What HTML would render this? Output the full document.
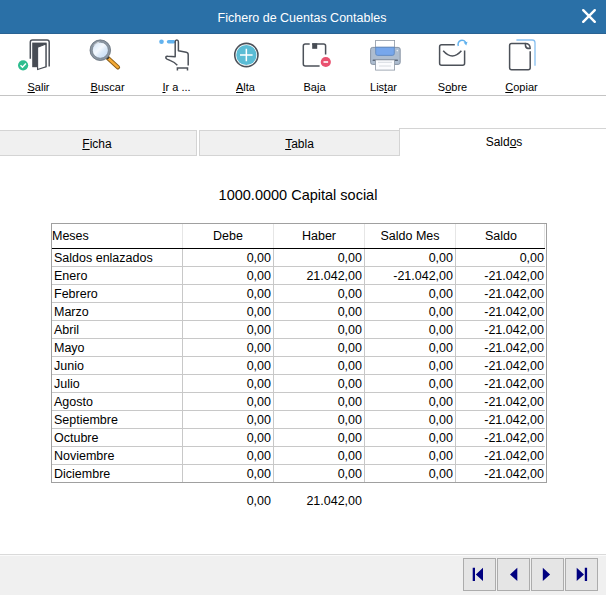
<!DOCTYPE html>
<html><head><meta charset="utf-8">
<style>
*{box-sizing:border-box;margin:0;padding:0}
html,body{width:606px;height:595px;overflow:hidden;background:#fff;font-family:"Liberation Sans",sans-serif;color:#000;position:relative}
.abs{position:absolute}
#title{left:0;top:0;width:606px;height:34px;background:#2a70a7;border-bottom:1px solid #2a6393}
#title .t{position:absolute;left:-1px;width:606px;top:11px;text-align:center;color:#fff;font-size:12.5px;line-height:14px}
#close{position:absolute;left:581px;top:8px;width:16px;height:16px}
#tbline{left:0;top:95px;width:606px;height:1px;background:#c4c4c4}
.lbl{position:absolute;top:81px;font-size:11px;line-height:13px;text-align:center;width:69px;white-space:nowrap}
.lbl u{text-decoration:underline}
.tab{position:absolute;top:130px;height:26px;background:#f0f0f0;border:1px solid #d4d4d4;font-size:12px;text-align:center;line-height:24px;padding-top:1px}
.tab.act{top:128px;height:28px;background:#fff;border-bottom:none;line-height:24px;padding-top:1px}
#heading{left:0;width:596px;top:186px;text-align:center;font-size:14.5px;line-height:18px}
#tbl{left:51px;top:223px;width:496px;height:260px;border:1px solid #a0a0a0}
.hl{position:absolute;background:#d4d4d4}
.c{position:absolute;font-size:12.5px;line-height:18px;white-space:nowrap}
.r{text-align:right}
#bottom{left:0;top:554px;width:606px;height:41px;background:#f0f0f0;border-top:1px solid #dadada;box-shadow:inset 0 1px #fafafa}
.nb{position:absolute;top:558px;width:33px;height:33px;background:#e5e5e5;border:1px solid #acacac}
</style></head><body>
<div id="title" class="abs"><div class="t">Fichero de Cuentas Contables</div>
<svg id="close" viewBox="0 0 16 16"><path d="M2.2 2.2L13.8 13.8M13.8 2.2L2.2 13.8" stroke="#fff" stroke-width="2.4" stroke-linecap="round"/></svg>
</div>

<svg class="abs" style="left:0;top:0" width="606" height="100" viewBox="0 0 606 100">
<defs>
<linearGradient id="lens" x1="0" y1="0" x2="1" y2="1"><stop offset="0" stop-color="#c9def6"/><stop offset="0.45" stop-color="#f4f9fe"/><stop offset="0.6" stop-color="#dbe9f8"/><stop offset="1" stop-color="#bcd5f1"/></linearGradient>
</defs>
<!-- Salir door -->
<path d="M30.3 58.7V42.2Q30.3 40 32.5 40H47Q49.2 40 49.2 42.2V66.5" fill="none" stroke="#4c5159" stroke-width="1.5"/>
<rect x="32.2" y="42.6" width="14.4" height="24.6" fill="#474c54"/>
<path d="M37.6 47.3L45.9 44.1V66.8L37.6 69.6Z" fill="#fff" stroke="#474c54" stroke-width="1.1"/>
<circle cx="23.1" cy="65.3" r="5.1" fill="#2ebd8f"/>
<path d="M20.5 65.2L22.5 67.2L25.9 63.6" fill="none" stroke="#fff" stroke-width="1.5"/>
<!-- Buscar magnifier -->
<path d="M107.4 57.6L118 67.4" stroke="#8a5d18" stroke-width="4.2" stroke-linecap="round"/>
<path d="M108.8 58.9L117.8 67.2" stroke="#f5aa35" stroke-width="2.5" stroke-linecap="round"/>
<path d="M106.6 56.8L108.6 58.6" stroke="#333" stroke-width="2.2"/>
<circle cx="100.3" cy="50.2" r="9.2" fill="url(#lens)" stroke="#8b96a2" stroke-width="2.5"/><circle cx="100.3" cy="50.2" r="10.3" fill="none" stroke="#5f6a76" stroke-width="0.7"/><circle cx="100.3" cy="50.2" r="8" fill="none" stroke="#6d7884" stroke-width="0.6"/>
<path d="M94 45.5Q96 42.5 99.5 42" fill="none" stroke="#fff" stroke-width="1" opacity="0.7"/>
<!-- Ir a hand -->
<circle cx="161.5" cy="41.8" r="2.3" fill="#62b2ee"/>
<path d="M168.6 41.8H173.6" stroke="#62b2ee" stroke-width="3.6" stroke-linecap="round"/>
<path d="M177.3 65.2Q174.5 62.2 170.5 60.6L167 59.1Q165.5 58.3 165.8 57.1Q166.3 56 167.8 56.2L175.2 56.8V41.7Q175.2 39.9 176.8 39.9Q178.4 39.9 178.4 41.7V50.8L186.2 52.2Q188.2 52.6 188.2 54.8V65.6" fill="none" stroke="#4c5159" stroke-width="1.5" stroke-linejoin="round"/>
<path d="M177.4 70.5V68H187.5V70.5" fill="none" stroke="#4c5159" stroke-width="1.5"/>
<!-- Alta -->
<circle cx="246.35" cy="55" r="11.6" fill="#fff" stroke="#4c5159" stroke-width="1.6"/>
<circle cx="246.35" cy="55" r="10.1" fill="#5bbcd5"/>
<path d="M240 55H252.6M246.35 48.7V61.3" stroke="#fff" stroke-width="1.5"/>
<!-- Baja -->
<path d="M309.7 44H305.3Q303.3 44 303.3 46V64Q303.3 66 305.3 66H319.6M312.2 44H323.6Q325.6 44 325.6 46V54.6" fill="none" stroke="#4c5159" stroke-width="1.5"/>
<rect x="312.2" y="43.3" width="5" height="5.5" fill="#474c54"/>
<circle cx="325.8" cy="62" r="5.1" fill="#e9516f"/>
<path d="M323.5 62H328.1" stroke="#fff" stroke-width="1.6"/>
<!-- Listar printer -->
<rect x="375.6" y="40.4" width="19" height="8" fill="#fff" stroke="#8c96a3" stroke-width="0.8"/>
<rect x="370.6" y="47.4" width="29.6" height="17" rx="2" fill="#adbdd0" stroke="#7e8b9c" stroke-width="0.9"/>
<path d="M375.7 47.2H394.3V53.6Q394.3 55.4 392.5 55.4H377.5Q375.7 55.4 375.7 53.6Z" fill="#77a7ec" stroke="#5b84bd" stroke-width="0.8"/>
<path d="M373.3 60.2H397.3" stroke="#5f6b7b" stroke-width="1.6" stroke-linecap="round"/>
<rect x="375.6" y="59.9" width="19" height="10.2" fill="#fbfcfe" stroke="#8c96a3" stroke-width="0.8"/>
<path d="M378 62.3H392M379 66H391" stroke="#d3d8de" stroke-width="0.9"/>
<circle cx="397.3" cy="50.6" r="0.8" fill="#e9eef4"/>
<!-- Sobre envelope -->
<path d="M454.8 44.8H441.6Q439.6 44.8 439.6 46.8V63.3Q439.6 65.3 441.6 65.3H462.6Q464.6 65.3 464.6 63.3V50.5M443.2 50.8Q452.3 61.2 461.4 50.8" fill="none" stroke="#4c5159" stroke-width="1.5"/>
<path d="M458.4 45.9A4 4 0 1 1 465.9 43.2" fill="none" stroke="#62b2ee" stroke-width="1.5"/>
<path d="M463.6 42.6L467.5 41.8L466.3 45.6Z" fill="#62b2ee"/>
<!-- Copiar -->
<path d="M516.4 40H532.2Q535 40 535 42.8V65.8" fill="none" stroke="#86bff0" stroke-width="1.3"/>
<path d="M525.5 43.4H511.6Q509.6 43.4 509.6 45.4V67.7Q509.6 69.7 511.6 69.7H528.2Q530.2 69.7 530.2 67.7V51.3" fill="none" stroke="#4c5159" stroke-width="1.5"/>
<path d="M525.3 43.4Q530.2 43.4 530.2 48.6Q526 48.8 525.5 46Z" fill="#fff" stroke="#4c5159" stroke-width="1.5" stroke-linejoin="round"/>
</svg>

<div id="tbline" class="abs"></div>

<div class="lbl" style="left:4px"><u>S</u>alir</div>
<div class="lbl" style="left:73px"><u>B</u>uscar</div>
<div class="lbl" style="left:142px"><u>I</u>r a ...</div>
<div class="lbl" style="left:211px"><u>A</u>lta</div>
<div class="lbl" style="left:280px">Baja</div>
<div class="lbl" style="left:349px">Lis<u>t</u>ar</div>
<div class="lbl" style="left:418px">S<u>o</u>bre</div>
<div class="lbl" style="left:487px"><u>C</u>opiar</div>

<div class="tab" style="left:-1px;width:198px;padding-right:2px"><u>F</u>icha</div>
<div class="tab" style="left:199px;width:201px"><u>T</u>abla</div>
<div class="tab act" style="left:399px;width:210px">Sald<u>o</u>s</div>

<div id="heading" class="abs">1000.0000 Capital social</div>

<div id="tbl" class="abs"></div>
<div class="hl" style="left:52px;top:248px;width:493px;height:1px;background:#000"></div>
<div class="hl" style="left:182px;top:224px;width:1px;height:24px;background:#e6e6e6"></div>
<div class="hl" style="left:182px;top:249px;width:1px;height:233px;background:#c8c8c8"></div>
<div class="hl" style="left:273px;top:224px;width:1px;height:24px;background:#e6e6e6"></div>
<div class="hl" style="left:273px;top:249px;width:1px;height:233px;background:#c8c8c8"></div>
<div class="hl" style="left:364px;top:224px;width:1px;height:24px;background:#e6e6e6"></div>
<div class="hl" style="left:364px;top:249px;width:1px;height:233px;background:#c8c8c8"></div>
<div class="hl" style="left:455px;top:224px;width:1px;height:24px;background:#e6e6e6"></div>
<div class="hl" style="left:455px;top:249px;width:1px;height:233px;background:#c8c8c8"></div>
<div class="hl" style="left:544px;top:224px;width:1px;height:24px;background:#e6e6e6"></div>
<div class="hl" style="left:52px;top:266px;width:493px;height:1px;background:#c8c8c8"></div>
<div class="hl" style="left:52px;top:284px;width:493px;height:1px;background:#c8c8c8"></div>
<div class="hl" style="left:52px;top:302px;width:493px;height:1px;background:#c8c8c8"></div>
<div class="hl" style="left:52px;top:320px;width:493px;height:1px;background:#c8c8c8"></div>
<div class="hl" style="left:52px;top:338px;width:493px;height:1px;background:#c8c8c8"></div>
<div class="hl" style="left:52px;top:356px;width:493px;height:1px;background:#c8c8c8"></div>
<div class="hl" style="left:52px;top:374px;width:493px;height:1px;background:#c8c8c8"></div>
<div class="hl" style="left:52px;top:392px;width:493px;height:1px;background:#c8c8c8"></div>
<div class="hl" style="left:52px;top:410px;width:493px;height:1px;background:#c8c8c8"></div>
<div class="hl" style="left:52px;top:428px;width:493px;height:1px;background:#c8c8c8"></div>
<div class="hl" style="left:52px;top:446px;width:493px;height:1px;background:#c8c8c8"></div>
<div class="hl" style="left:52px;top:464px;width:493px;height:1px;background:#c8c8c8"></div>
<div class="c" style="left:52px;top:224px;line-height:24px">Meses</div>
<div class="c" style="left:183px;width:90px;text-align:center;top:224px;line-height:24px">Debe</div>
<div class="c" style="left:274px;width:90px;text-align:center;top:224px;line-height:24px">Haber</div>
<div class="c" style="left:365px;width:90px;text-align:center;top:224px;line-height:24px">Saldo Mes</div>
<div class="c" style="left:456px;width:90px;text-align:center;top:224px;line-height:24px">Saldo</div>
<div class="c" style="left:54px;top:249px">Saldos enlazados</div>
<div class="c r" style="left:183px;width:88px;top:249px">0,00</div>
<div class="c r" style="left:274px;width:88px;top:249px">0,00</div>
<div class="c r" style="left:365px;width:88px;top:249px">0,00</div>
<div class="c r" style="left:456px;width:88px;top:249px">0,00</div>
<div class="c" style="left:54px;top:267px">Enero</div>
<div class="c r" style="left:183px;width:88px;top:267px">0,00</div>
<div class="c r" style="left:274px;width:88px;top:267px">21.042,00</div>
<div class="c r" style="left:365px;width:88px;top:267px">-21.042,00</div>
<div class="c r" style="left:456px;width:88px;top:267px">-21.042,00</div>
<div class="c" style="left:54px;top:285px">Febrero</div>
<div class="c r" style="left:183px;width:88px;top:285px">0,00</div>
<div class="c r" style="left:274px;width:88px;top:285px">0,00</div>
<div class="c r" style="left:365px;width:88px;top:285px">0,00</div>
<div class="c r" style="left:456px;width:88px;top:285px">-21.042,00</div>
<div class="c" style="left:54px;top:303px">Marzo</div>
<div class="c r" style="left:183px;width:88px;top:303px">0,00</div>
<div class="c r" style="left:274px;width:88px;top:303px">0,00</div>
<div class="c r" style="left:365px;width:88px;top:303px">0,00</div>
<div class="c r" style="left:456px;width:88px;top:303px">-21.042,00</div>
<div class="c" style="left:54px;top:321px">Abril</div>
<div class="c r" style="left:183px;width:88px;top:321px">0,00</div>
<div class="c r" style="left:274px;width:88px;top:321px">0,00</div>
<div class="c r" style="left:365px;width:88px;top:321px">0,00</div>
<div class="c r" style="left:456px;width:88px;top:321px">-21.042,00</div>
<div class="c" style="left:54px;top:339px">Mayo</div>
<div class="c r" style="left:183px;width:88px;top:339px">0,00</div>
<div class="c r" style="left:274px;width:88px;top:339px">0,00</div>
<div class="c r" style="left:365px;width:88px;top:339px">0,00</div>
<div class="c r" style="left:456px;width:88px;top:339px">-21.042,00</div>
<div class="c" style="left:54px;top:357px">Junio</div>
<div class="c r" style="left:183px;width:88px;top:357px">0,00</div>
<div class="c r" style="left:274px;width:88px;top:357px">0,00</div>
<div class="c r" style="left:365px;width:88px;top:357px">0,00</div>
<div class="c r" style="left:456px;width:88px;top:357px">-21.042,00</div>
<div class="c" style="left:54px;top:375px">Julio</div>
<div class="c r" style="left:183px;width:88px;top:375px">0,00</div>
<div class="c r" style="left:274px;width:88px;top:375px">0,00</div>
<div class="c r" style="left:365px;width:88px;top:375px">0,00</div>
<div class="c r" style="left:456px;width:88px;top:375px">-21.042,00</div>
<div class="c" style="left:54px;top:393px">Agosto</div>
<div class="c r" style="left:183px;width:88px;top:393px">0,00</div>
<div class="c r" style="left:274px;width:88px;top:393px">0,00</div>
<div class="c r" style="left:365px;width:88px;top:393px">0,00</div>
<div class="c r" style="left:456px;width:88px;top:393px">-21.042,00</div>
<div class="c" style="left:54px;top:411px">Septiembre</div>
<div class="c r" style="left:183px;width:88px;top:411px">0,00</div>
<div class="c r" style="left:274px;width:88px;top:411px">0,00</div>
<div class="c r" style="left:365px;width:88px;top:411px">0,00</div>
<div class="c r" style="left:456px;width:88px;top:411px">-21.042,00</div>
<div class="c" style="left:54px;top:429px">Octubre</div>
<div class="c r" style="left:183px;width:88px;top:429px">0,00</div>
<div class="c r" style="left:274px;width:88px;top:429px">0,00</div>
<div class="c r" style="left:365px;width:88px;top:429px">0,00</div>
<div class="c r" style="left:456px;width:88px;top:429px">-21.042,00</div>
<div class="c" style="left:54px;top:447px">Noviembre</div>
<div class="c r" style="left:183px;width:88px;top:447px">0,00</div>
<div class="c r" style="left:274px;width:88px;top:447px">0,00</div>
<div class="c r" style="left:365px;width:88px;top:447px">0,00</div>
<div class="c r" style="left:456px;width:88px;top:447px">-21.042,00</div>
<div class="c" style="left:54px;top:465px">Diciembre</div>
<div class="c r" style="left:183px;width:88px;top:465px">0,00</div>
<div class="c r" style="left:274px;width:88px;top:465px">0,00</div>
<div class="c r" style="left:365px;width:88px;top:465px">0,00</div>
<div class="c r" style="left:456px;width:88px;top:465px">-21.042,00</div>
<div class="c r" style="left:183px;width:88px;top:492px">0,00</div>
<div class="c r" style="left:274px;width:88px;top:492px">21.042,00</div>

<div id="bottom" class="abs"></div>
<div class="nb" style="left:463px"></div>
<div class="nb" style="left:497px"></div>
<div class="nb" style="left:531px"></div>
<div class="nb" style="left:565px"></div>
<svg class="abs" style="left:0;top:550px" width="606" height="45" viewBox="0 550 606 45">
<path d="M472.7 567.8H475V581H472.7Z M483 567.8V581L475.8 574.4Z" fill="#000080"/>
<path d="M517.3 567.8V581L510 574.4Z" fill="#000080"/>
<path d="M542.8 567.8V581L550.1 574.4Z" fill="#000080"/>
<path d="M576.7 567.8V581L584 574.4Z M584.8 567.8H587.1V581H584.8Z" fill="#000080"/>
</svg>
</body></html>
